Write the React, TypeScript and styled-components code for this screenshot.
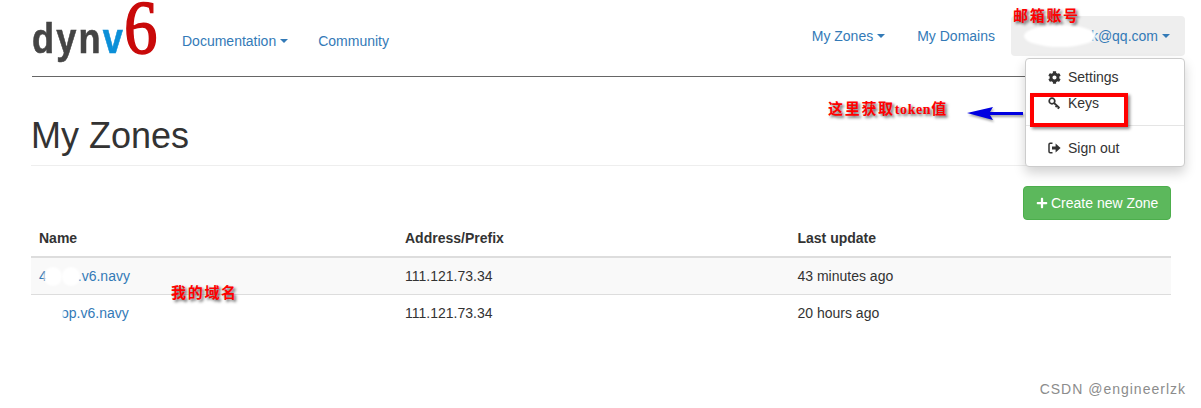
import * as React from "react";
import styled, { createGlobalStyle } from "styled-components";
import { FaCog, FaPlus } from "react-icons/fa";

const GlobalStyle = createGlobalStyle`
  html, body {
    margin: 0;
    background: #fff;
  }
  body {
    font-family: "Liberation Sans", Arial, sans-serif;
    font-size: 14px;
    line-height: 20px;
    color: #333;
  }
  * {
    box-sizing: border-box;
  }
`;

const Page = styled.div`
  position: relative;
  width: 1201px;
  height: 408px;
  padding: 0 30px 0 31px;
  overflow: hidden;
`;

const Nav = styled.nav`
  display: flex;
  justify-content: space-between;
  height: 77px;
  border-bottom: 1px solid #666;
  margin-left: 1px;
`;

const Left = styled.div`
  display: flex;
  align-items: flex-start;
`;

const Logo = styled.div`
  display: flex;
  align-items: baseline;
  width: 150px;
  height: 70px;
  font-weight: 700;
  line-height: 54px;
`;

const LogoWord = styled.span`
  display: inline-block;
  width: 92px;
  font-size: 42px;
  letter-spacing: 2.5px;
  color: #444;
  -webkit-text-stroke: 0.6px currentColor;
  transform: scaleX(0.86);
  transform-origin: left center;
  white-space: nowrap;
`;

const LogoV = styled.span`
  color: #0b8fd8;
`;

const LogoSix = styled.span`
  display: inline-block;
  font-family: "Liberation Serif", serif;
  font-size: 76px;
  font-weight: 400;
  color: #c90a0a;
  -webkit-text-stroke: 1.6px #c90a0a;
  transform: scaleX(0.88);
  transform-origin: left center;
`;

const NavLink = styled.a<{ $gap?: number }>`
  display: inline-flex;
  align-items: center;
  gap: 4px;
  color: #337ab7;
  margin-right: ${({ $gap }) => $gap ?? 0}px;
`;

const LeftLinks = styled.div`
  display: flex;
  padding-top: 31px;
`;

const Right = styled.div`
  display: flex;
  align-items: flex-start;
  margin-right: -14px;
  padding-top: 16px;
`;

const RightLinks = styled.div`
  display: flex;
  height: 40px;
  align-items: center;
  margin-right: 16px;
`;

const UserPill = styled.div`
  position: relative;
  display: flex;
  align-items: center;
  justify-content: flex-end;
  gap: 4px;
  width: 174px;
  height: 40px;
  padding-right: 15px;
  background: #eee;
  border-radius: 4px;
  color: #337ab7;
`;

const Caret = styled.span`
  display: inline-block;
  width: 0;
  height: 0;
  border-top: 4px solid currentColor;
  border-left: 4px solid transparent;
  border-right: 4px solid transparent;
`;

const Menu = styled.div`
  position: absolute;
  top: 58px;
  left: 1025px;
  width: 160px;
  height: 109px;
  padding: 5px 0;
  background: #fff;
  border: 1px solid #ccc;
  border-radius: 4px;
  box-shadow: 0 6px 12px rgba(0, 0, 0, 0.175);
`;

const MenuItem = styled.div`
  display: flex;
  align-items: center;
  gap: 7px;
  height: 26px;
  padding-left: 22px;
  color: #333;
`;

const MenuDivider = styled.div`
  height: 1px;
  margin: 9px 0 9px;
  background: #e5e5e5;
`;

const MenuIcon = styled.span`
  display: inline-flex;
  align-items: center;
  justify-content: center;
  width: 13px;
  height: 14px;
  font-size: 13px;
`;

const Title = styled.h1`
  margin: 39px 0 20px;
  padding-bottom: 9px;
  height: 50px;
  border-bottom: 1px solid #eee;
  font-size: 36px;
  font-weight: 400;
  line-height: 40px;
  color: #333;
`;

const Actions = styled.div`
  display: flex;
  justify-content: flex-end;
`;

const CreateButton = styled.button`
  display: inline-flex;
  align-items: center;
  gap: 3px;
  height: 34px;
  width: 148px;
  padding: 0 0 0 12px;
  font: inherit;
  white-space: nowrap;
  color: #fff;
  background: #5cb85c;
  border: 1px solid #4cae4c;
  border-radius: 4px;
`;

const Row = styled.div<{ $striped?: boolean; $head?: boolean }>`
  display: grid;
  grid-template-columns: 366px 392.5px 1fr;
  height: ${({ $head }) => ($head ? 38 : 37)}px;
  padding: 8px;
  background: ${({ $striped }) => ($striped ? "#f9f9f9" : "transparent")};
  border-bottom: ${({ $head, $striped }) =>
    $head ? "2px solid #ddd" : $striped ? "1px solid #ddd" : "0"};
  font-weight: ${({ $head }) => ($head ? 700 : 400)};
`;

const DomainLink = styled.a`
  color: #337ab7;
`;

const Smudge = styled.span<{ $w: number }>`
  display: inline-block;
  width: ${({ $w }) => $w}px;
`;

const Blob = styled.span<{ $w: number; $h: number; $x: number; $y: number }>`
  position: absolute;
  left: ${({ $x }) => $x}px;
  top: ${({ $y }) => $y}px;
  width: ${({ $w }) => $w}px;
  height: ${({ $h }) => $h}px;
  background: #fff;
  border-radius: 50%;
  filter: blur(1px);
`;

const Note = styled.span<{ $x: number; $y: number }>`
  position: absolute;
  left: ${({ $x }) => $x}px;
  top: ${({ $y }) => $y}px;
  font-family: "Liberation Serif", "Noto Sans CJK SC", serif;
  font-size: 15px;
  font-weight: 700;
  line-height: 18px;
  letter-spacing: 1.7px;
  color: #f00;
  text-shadow: 2px 2px 3px rgba(0, 0, 0, 0.6);
  white-space: nowrap;
`;

const NoteLatin = styled.span`
  font-size: 14px;
  letter-spacing: 0.6px;
`;

const KeysBox = styled.div`
  position: absolute;
  left: 1030px;
  top: 93px;
  width: 98px;
  height: 34px;
  border: 4px solid #f00;
  box-shadow: 2px 2px 3px rgba(0, 0, 0, 0.45);
`;

const Arrow = styled.svg`
  position: absolute;
  left: 966px;
  top: 104px;
  filter: drop-shadow(1px 2px 1px rgba(0, 0, 0, 0.35));
`;

const Watermark = styled.span`
  position: absolute;
  right: 15px;
  top: 379px;
  font-size: 14px;
  letter-spacing: 1px;
  color: #8c8c8c;
`;

const KeyIcon = () => (
  <svg width="13" height="13" viewBox="0 0 13 13">
    <circle cx="4" cy="4" r="2.8" fill="none" stroke="#333" strokeWidth="1.7" />
    <path d="M6 6l5.5 5M9 8.5l-1.4 1.6M11 10.4l-1.2 1.4" fill="none" stroke="#333" strokeWidth="1.7" />
  </svg>
);

const SignOutIcon = () => (
  <svg width="13" height="12" viewBox="0 0 13 12">
    <path d="M4.5 1.2H2.2Q1 1.2 1 2.4v7.2q0 1.2 1.2 1.2h2.3" fill="none" stroke="#333" strokeWidth="1.5" />
    <path d="M4 4.4h3.6V1.6L12.6 6l-5 4.4V7.6H4z" fill="#333" />
  </svg>
);

const App = () => {
  return (
    <Page>
      <GlobalStyle />
      <Nav>
        <Left>
          <Logo>
            <LogoWord>
              dyn<LogoV>v</LogoV>
            </LogoWord>
            <LogoSix>6</LogoSix>
          </Logo>
          <LeftLinks>
            <NavLink $gap={30}>
              Documentation <Caret />
            </NavLink>
            <NavLink>Community</NavLink>
          </LeftLinks>
        </Left>
        <Right>
          <RightLinks>
            <NavLink $gap={32}>
              My Zones <Caret />
            </NavLink>
            <NavLink>My Domains</NavLink>
          </RightLinks>
          <UserPill>
            k@qq.com <Caret />
            <Blob $x={13} $y={9} $w={72} $h={22} />
          </UserPill>
        </Right>
      </Nav>

      <Title>My Zones</Title>

      <Actions>
        <CreateButton>
          <FaPlus size={12} /> Create new Zone
        </CreateButton>
      </Actions>

      <div>
        <Row $head>
          <span>Name</span>
          <span>Address/Prefix</span>
          <span>Last update</span>
        </Row>
        <Row $striped>
          <DomainLink>
            4<Smudge $w={31} />.v6.navy
            <Blob $x={44} $y={267} $w={18} $h={19} />
            <Blob $x={62} $y={267} $w={18} $h={19} />
          </DomainLink>
          <span>111.121.73.34</span>
          <span>43 minutes ago</span>
        </Row>
        <Row>
          <DomainLink>
            <Smudge $w={22} />op.v6.navy
            <Blob $x={44} $y={304} $w={20} $h={19} />
          </DomainLink>
          <span>111.121.73.34</span>
          <span>20 hours ago</span>
        </Row>
      </div>

      <Menu>
        <MenuItem>
          <MenuIcon>
            <FaCog />
          </MenuIcon>
          Settings
        </MenuItem>
        <MenuItem>
          <MenuIcon>
            <KeyIcon />
          </MenuIcon>
          Keys
        </MenuItem>
        <MenuDivider />
        <MenuItem>
          <MenuIcon>
            <SignOutIcon />
          </MenuIcon>
          Sign out
        </MenuItem>
      </Menu>

      <KeysBox />
      <Arrow width="60" height="18" viewBox="0 0 60 18">
        <path d="M1 9L27 3l-3 5h33v3H24l3 5z" fill="#0000e0" />
      </Arrow>

      <Note $x={1013} $y={7}>邮箱账号</Note>
      <Note $x={828} $y={100}>
        这里获取<NoteLatin>token</NoteLatin>值
      </Note>
      <Note $x={171} $y={284}>我的域名</Note>

      <Watermark>CSDN @engineerlzk</Watermark>
    </Page>
  );
};

export default App;
